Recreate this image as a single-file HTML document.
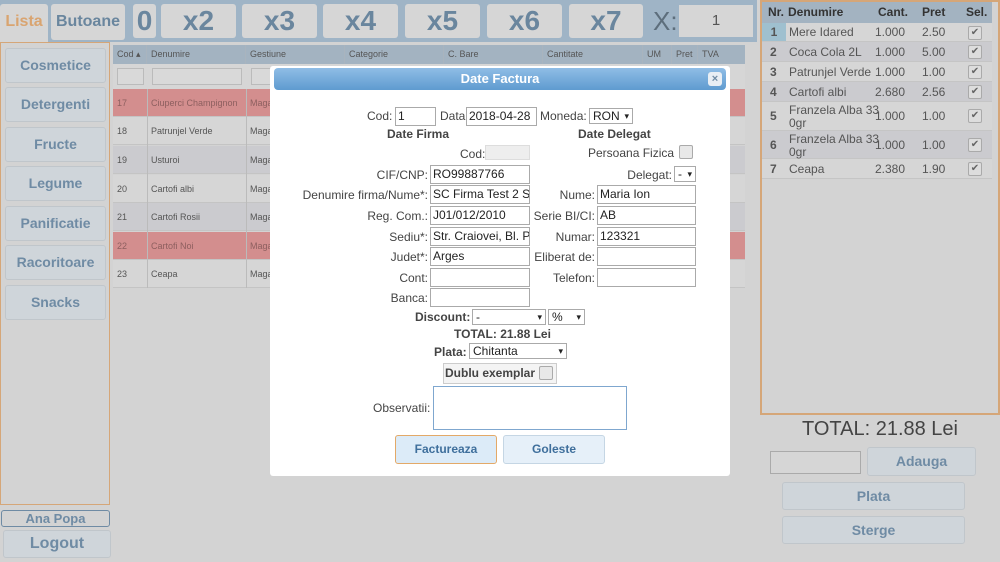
<!DOCTYPE html>
<html><head><meta charset="utf-8"><style>
*{box-sizing:border-box;margin:0;padding:0}
body{width:1000px;height:562px;position:relative;overflow:hidden;background:#d3d3d3;font-family:"Liberation Sans",Arial,sans-serif;color:#555}
.a{position:absolute}
.tb{position:absolute;top:4px;height:34px;background:#d6d6d6;border-radius:3px;color:#6a869e;font-weight:bold;font-size:28px;text-align:center;line-height:34px}
.cat{position:absolute;left:5px;width:101px;height:35px;background:#cfd5da;border:1px solid #c0c6cb;border-radius:3px;color:#6f8ba4;font-weight:bold;font-size:14px;text-align:center;line-height:33px}
.th{position:absolute;top:45px;height:19px;font-size:9px;color:#555;line-height:19px;padding-left:4px;border-right:1px solid #a9b4be}
.row{position:absolute;left:113px;width:632px;height:28px;font-size:9px;line-height:28px;border-bottom:1px solid #c4c4c4}
.row span{position:absolute}
.lbl{position:absolute;font-size:12px;color:#444;text-align:right;white-space:nowrap}
.inp{position:absolute;height:19px;border:1px solid #aaa;background:#fff;font-size:12px;color:#222;padding-left:2px;line-height:17px;overflow:hidden;white-space:nowrap}
.sel{position:absolute;height:16px;border:1px solid #aaa;background:#fff;font-size:12px;color:#222;padding-left:3px;line-height:14px}
.sel:after{content:"▾";position:absolute;right:3px;top:0;font-size:9px}
.b{font-weight:bold}
.rr{position:absolute;left:762px;width:230px;font-size:12px;color:#555;border-bottom:1px solid #c5c5c5}
.rr span{position:absolute}
.ck{position:absolute;left:968px;width:14px;height:14px;border:1px solid #aaa;background:#ddd;border-radius:2px;font-size:10px;text-align:center;line-height:12px;color:#666}
.bb{position:absolute;background:#cfd5da;border:1px solid #c0c6cb;border-radius:3px;color:#6f8ba4;font-weight:bold;font-size:14px;text-align:center}
</style></head><body>
<!-- top bar -->
<div class="a" style="left:0;top:0;width:757px;height:42px;background:#9fb4c6"></div>
<div class="a" style="left:0;top:4px;width:48px;height:38px;background:#d6d6d6;border-radius:3px 3px 0 0;color:#d9a470;font-weight:bold;font-size:16px;line-height:36px;text-align:center">Lista</div>
<div class="a" style="left:51px;top:4px;width:74px;height:36px;background:#d6d6d6;border-radius:3px;color:#6a869e;font-weight:bold;font-size:16px;line-height:36px;text-align:center">Butoane</div>
<div class="tb" style="left:133px;width:23px">0</div>
<div class="tb" style="left:161px;width:75px">x2</div>
<div class="tb" style="left:242px;width:75px">x3</div>
<div class="tb" style="left:323px;width:75px">x4</div>
<div class="tb" style="left:405px;width:75px">x5</div>
<div class="tb" style="left:487px;width:75px">x6</div>
<div class="tb" style="left:569px;width:74px">x7</div>
<div class="a" style="left:653px;top:4px;font-size:26px;color:#5d6e7c;line-height:34px">X:</div>
<div class="a" style="left:679px;top:5px;width:74px;height:32px;background:#d6d6d6;font-size:15px;color:#555;text-align:center;line-height:32px">1</div>
<!-- left panel -->
<div class="a" style="left:0;top:42px;width:110px;height:463px;border:1px solid #d5a678;background:#d3d3d3"></div>
<div class="cat" style="top:48px">Cosmetice</div>
<div class="cat" style="top:87px">Detergenti</div>
<div class="cat" style="top:127px">Fructe</div>
<div class="cat" style="top:166px">Legume</div>
<div class="cat" style="top:206px">Panificatie</div>
<div class="cat" style="top:245px">Racoritoare</div>
<div class="cat" style="top:285px">Snacks</div>
<div class="a" style="left:1px;top:510px;width:109px;height:17px;border:1px solid #6f8ba4;border-radius:3px;color:#6f8ba4;font-weight:bold;font-size:13px;text-align:center;line-height:15px">Ana Popa</div>
<div class="bb" style="left:3px;top:530px;width:108px;height:28px;font-size:16px;line-height:26px">Logout</div>
<!-- table -->
<div class="a" style="left:113px;top:45px;width:632px;height:19px;background:#a3b3c1"></div>
<div class="th" style="left:113px;width:34px">Cod ▴</div>
<div class="th" style="left:147px;width:99px">Denumire</div>
<div class="th" style="left:246px;width:99px">Gestiune</div>
<div class="th" style="left:345px;width:99px">Categorie</div>
<div class="th" style="left:444px;width:99px">C. Bare</div>
<div class="th" style="left:543px;width:100px">Cantitate</div>
<div class="th" style="left:643px;width:29px">UM</div>
<div class="th" style="left:672px;width:26px">Pret</div>
<div class="th" style="left:698px;width:32px;border:0">TVA</div>
<div class="a" style="left:113px;top:64px;width:632px;height:25px;background:#d6d6d6"></div>
<div class="a" style="left:117px;top:68px;width:27px;height:17px;border:1px solid #bbb;background:#d9d9d9"></div>
<div class="a" style="left:152px;top:68px;width:90px;height:17px;border:1px solid #bbb;background:#d9d9d9"></div>
<div class="a" style="left:251px;top:68px;width:30px;height:17px;border:1px solid #bbb;background:#d9d9d9"></div>
<div class="row" style="top:89px;background:#d38e8e;color:#8d5f5f"><span style="left:4px">17</span><span style="left:38px">Ciuperci Champignon</span><span style="left:137px">Maga</span></div>
<div class="row" style="top:117px;background:#d6d6d6"><span style="left:4px">18</span><span style="left:38px">Patrunjel Verde</span><span style="left:137px">Maga</span></div>
<div class="row" style="top:146px;background:#cbcbcf"><span style="left:4px">19</span><span style="left:38px">Usturoi</span><span style="left:137px">Maga</span></div>
<div class="row" style="top:175px;background:#d6d6d6"><span style="left:4px">20</span><span style="left:38px">Cartofi albi</span><span style="left:137px">Maga</span></div>
<div class="row" style="top:203px;background:#cbcbcf"><span style="left:4px">21</span><span style="left:38px">Cartofi Rosii</span><span style="left:137px">Maga</span></div>
<div class="row" style="top:232px;background:#d38e8e;color:#8d5f5f"><span style="left:4px">22</span><span style="left:38px">Cartofi Noi</span><span style="left:137px">Maga</span></div>
<div class="row" style="top:260px;background:#d6d6d6"><span style="left:4px">23</span><span style="left:38px">Ceapa</span><span style="left:137px">Maga</span></div>
<div class="a" style="left:147px;top:89px;width:1px;height:199px;background:#bbb"></div>
<div class="a" style="left:246px;top:89px;width:1px;height:199px;background:#bbb"></div>
<!-- right panel -->
<div class="a" style="left:760px;top:0;width:240px;height:415px;border:2px solid #d5a678;background:#d3d3d3"></div>
<div class="a" style="left:762px;top:2px;width:230px;height:21px;background:#a3b3c1;font-weight:bold;font-size:12px;color:#333;line-height:21px">
<span class="a" style="left:6px">Nr.</span><span class="a" style="left:26px">Denumire</span><span class="a" style="left:116px">Cant.</span><span class="a" style="left:160px">Pret</span><span class="a" style="left:204px">Sel.</span></div>
<div class="rr" style="top:23px;height:19px;line-height:19px;background:#d6d6d6"><span style="left:0;width:24px;height:18px;background:#9fc0cf;text-align:center;font-weight:bold">1</span><span style="left:27px">Mere Idared</span><span style="left:113px">1.000</span><span style="left:160px">2.50</span></div>
<div class="rr" style="top:42px;height:20px;line-height:20px;background:#cbcbcf"><span style="left:8px;font-weight:bold">2</span><span style="left:27px">Coca Cola 2L</span><span style="left:113px">1.000</span><span style="left:160px">5.00</span></div>
<div class="rr" style="top:62px;height:20px;line-height:20px;background:#d6d6d6"><span style="left:8px;font-weight:bold">3</span><span style="left:27px">Patrunjel Verde</span><span style="left:113px">1.000</span><span style="left:160px">1.00</span></div>
<div class="rr" style="top:82px;height:20px;line-height:20px;background:#cbcbcf"><span style="left:8px;font-weight:bold">4</span><span style="left:27px">Cartofi albi</span><span style="left:113px">2.680</span><span style="left:160px">2.56</span></div>
<div class="rr" style="top:102px;height:29px;line-height:29px;background:#d6d6d6"><span style="left:8px;font-weight:bold">5</span><span style="left:27px;line-height:13px;top:2px">Franzela Alba 33<br>0gr</span><span style="left:113px">1.000</span><span style="left:160px">1.00</span></div>
<div class="rr" style="top:131px;height:28px;line-height:28px;background:#cbcbcf"><span style="left:8px;font-weight:bold">6</span><span style="left:27px;line-height:13px;top:2px">Franzela Alba 33<br>0gr</span><span style="left:113px">1.000</span><span style="left:160px">1.00</span></div>
<div class="rr" style="top:159px;height:20px;line-height:20px;background:#d6d6d6"><span style="left:8px;font-weight:bold">7</span><span style="left:27px">Ceapa</span><span style="left:113px">2.380</span><span style="left:160px">1.90</span></div>
<div class="ck" style="top:26px">✔</div><div class="ck" style="top:45px">✔</div><div class="ck" style="top:65px">✔</div><div class="ck" style="top:85px">✔</div><div class="ck" style="top:109px">✔</div><div class="ck" style="top:138px">✔</div><div class="ck" style="top:162px">✔</div>
<div class="a" style="left:760px;top:418px;width:240px;text-align:center;font-size:20px;color:#444">TOTAL: 21.88 Lei</div>
<div class="a" style="left:770px;top:451px;width:91px;height:23px;border:1px solid #aaa;background:#d6d6d6"></div>
<div class="bb" style="left:867px;top:447px;width:109px;height:29px;line-height:27px">Adauga</div>
<div class="bb" style="left:782px;top:482px;width:183px;height:28px;line-height:26px">Plata</div>
<div class="bb" style="left:782px;top:516px;width:183px;height:28px;line-height:26px">Sterge</div>
<!-- modal -->
<div class="a" style="left:270px;top:66px;width:460px;height:410px;background:#fff;border-radius:3px"></div>
<div class="a" style="left:274px;top:68px;width:452px;height:22px;background:linear-gradient(#8fbde6,#5f9bd0);border-radius:4px;color:#fff;font-weight:bold;font-size:13px;text-align:center;line-height:22px">Date Factura</div>
<div class="a" style="left:708px;top:72px;width:14px;height:14px;background:#e8eef4;border-radius:3px;color:#6f8ba4;font-size:11px;font-weight:bold;text-align:center;line-height:14px">×</div>

<div class="lbl" style="left:367px;top:109px">Cod:</div><div class="inp" style="left:395px;top:107px;width:41px">1</div>
<div class="lbl" style="left:440px;top:109px">Data</div><div class="inp" style="left:466px;top:107px;width:71px">2018-04-28</div>
<div class="lbl" style="left:540px;top:109px">Moneda:</div><div class="sel" style="left:589px;top:108px;width:44px">RON</div>
<div class="lbl b" style="left:387px;top:127px">Date Firma</div>
<div class="lbl b" style="left:578px;top:127px">Date Delegat</div>
<div class="lbl" style="left:460px;top:147px">Cod:</div><div class="a" style="left:485px;top:145px;width:45px;height:15px;background:#eee;border:1px solid #ddd"></div>
<div class="lbl" style="left:588px;top:146px">Persoana Fizica</div><div class="a" style="left:679px;top:145px;width:14px;height:14px;border:1px solid #aaa;background:#e8e8e8;border-radius:2px"></div>

<div class="lbl" style="right:572px;top:168px">CIF/CNP:</div><div class="inp" style="left:430px;top:165px;width:100px">RO99887766</div>
<div class="lbl" style="right:572px;top:188px">Denumire firma/Nume*:</div><div class="inp" style="left:430px;top:185px;width:100px">SC Firma Test 2 S</div>
<div class="lbl" style="right:572px;top:209px">Reg. Com.:</div><div class="inp" style="left:430px;top:206px;width:100px">J01/012/2010</div>
<div class="lbl" style="right:572px;top:230px">Sediu*:</div><div class="inp" style="left:430px;top:227px;width:100px">Str. Craiovei, Bl. P-</div>
<div class="lbl" style="right:572px;top:250px">Judet*:</div><div class="inp" style="left:430px;top:247px;width:100px">Arges</div>
<div class="lbl" style="right:572px;top:271px">Cont:</div><div class="inp" style="left:430px;top:268px;width:100px"></div>
<div class="lbl" style="right:572px;top:291px">Banca:</div><div class="inp" style="left:430px;top:288px;width:100px"></div>

<div class="lbl" style="right:328px;top:168px">Delegat:</div><div class="sel" style="left:674px;top:166px;width:22px">-</div>
<div class="lbl" style="right:405px;top:188px">Nume:</div><div class="inp" style="left:597px;top:185px;width:99px">Maria Ion</div>
<div class="lbl" style="right:405px;top:209px">Serie BI/CI:</div><div class="inp" style="left:597px;top:206px;width:99px">AB</div>
<div class="lbl" style="right:405px;top:230px">Numar:</div><div class="inp" style="left:597px;top:227px;width:99px">123321</div>
<div class="lbl" style="right:405px;top:250px">Eliberat de:</div><div class="inp" style="left:597px;top:247px;width:99px"></div>
<div class="lbl" style="right:405px;top:271px">Telefon:</div><div class="inp" style="left:597px;top:268px;width:99px"></div>

<div class="lbl b" style="left:415px;top:310px">Discount:</div><div class="sel" style="left:472px;top:309px;width:74px">-</div><div class="sel" style="left:548px;top:309px;width:37px">%</div>
<div class="lbl b" style="left:454px;top:327px">TOTAL: 21.88 Lei</div>
<div class="lbl b" style="left:434px;top:345px">Plata:</div><div class="sel" style="left:469px;top:343px;width:98px">Chitanta</div>
<div class="a" style="left:443px;top:363px;width:114px;height:21px;border:1px solid #ccc;background:#f4f4f4"></div>
<div class="lbl b" style="left:445px;top:366px">Dublu exemplar</div><div class="a" style="left:539px;top:366px;width:14px;height:14px;border:1px solid #aaa;background:#e8e8e8;border-radius:2px"></div>
<div class="lbl" style="left:373px;top:401px">Observatii:</div><div class="a" style="left:433px;top:386px;width:194px;height:44px;border:1px solid #7fa7cf"></div>
<div class="a" style="left:395px;top:435px;width:102px;height:29px;border:1px solid #e3a968;border-radius:3px;background:#dcebf8;color:#3f6f9c;font-weight:bold;font-size:12px;text-align:center;line-height:27px">Factureaza</div>
<div class="a" style="left:503px;top:435px;width:102px;height:29px;border:1px solid #c5d6e4;border-radius:3px;background:#e6f0f9;color:#3f6f9c;font-weight:bold;font-size:12px;text-align:center;line-height:27px">Goleste</div>
</body></html>
